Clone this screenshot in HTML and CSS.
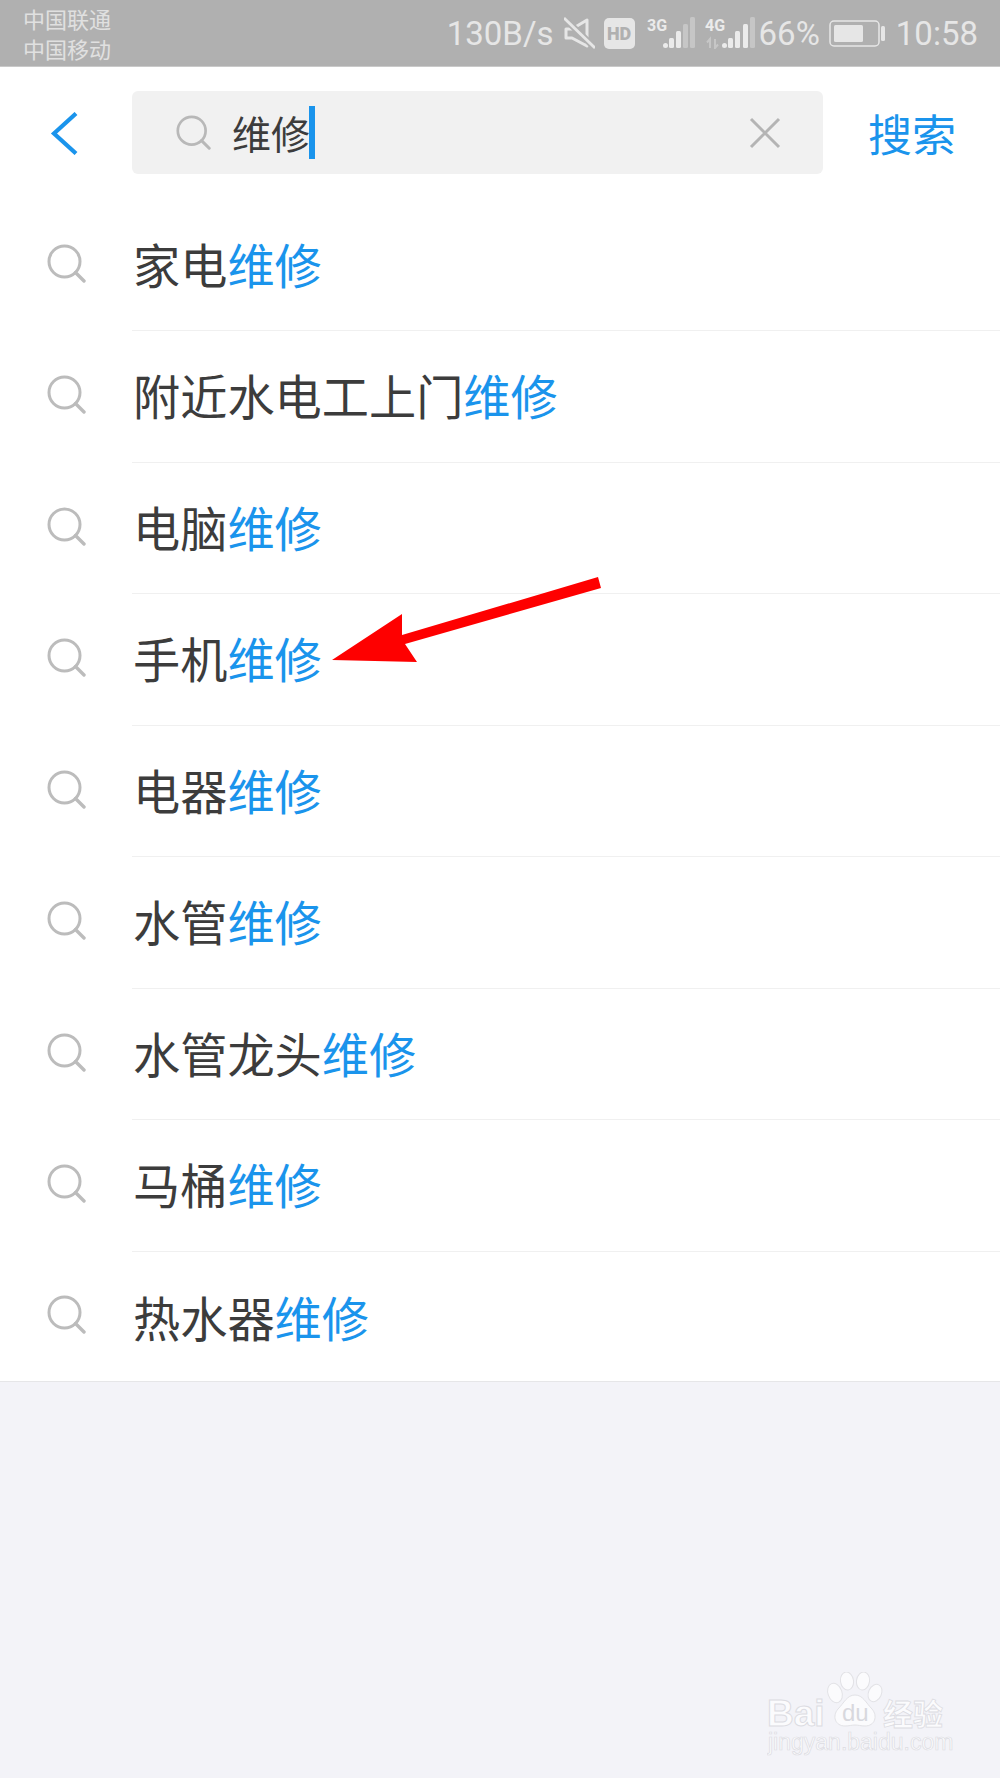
FILE: index.html
```html
<!DOCTYPE html>
<html lang="zh-CN">
<head>
<meta charset="utf-8">
<title>搜索</title>
<link rel="stylesheet" href="styles.css">
</head>
<body>
<svg class="defs" width="0" height="0" aria-hidden="true">
  <defs>
    <symbol id="search" viewBox="0 0 39 39">
      <circle cx="17.5" cy="17.5" r="15.5" fill="none" stroke="currentColor" stroke-width="3"/>
      <path d="M28.5 28.5L37 37" fill="none" stroke="currentColor" stroke-width="3.4" stroke-linecap="round"/>
    </symbol>
  </defs>
</svg>
<div class="page">
  <header class="status">
    <div class="carriers"><div>中国联通</div><div>中国移动</div></div>
    <div class="status-right">
      <span class="speed">130B/s</span>
      <svg class="mute" width="31" height="32" viewBox="0 0 31 32">
        <path d="M2 12h6L23 3v26L8 21H2z" fill="none" stroke="#e6e6e6" stroke-width="3" stroke-linejoin="round"/>
        <path d="M0 1L31 31" stroke="#b0b0b0" stroke-width="6.500"/>
        <path d="M0 1L31 31" stroke="#e6e6e6" stroke-width="2.800"/>
      </svg>
      <span class="hd">HD</span>
      <svg class="signal" width="48" height="32" viewBox="0 0 48 32">
        <text x="0" y="14" class="net">3G</text>
        <rect x="16" y="26" width="5" height="5" rx="2.500" fill="#ebebeb"/>
        <rect x="22" y="21" width="5" height="10" rx="1.500" fill="#ebebeb"/>
        <rect x="29" y="14" width="5" height="17" rx="1.500" fill="#ebebeb"/>
        <rect x="36" y="7" width="5" height="24" rx="1.500" fill="#c6c6c6"/>
        <rect x="43" y="0" width="5" height="31" rx="1.500" fill="#c6c6c6"/>
      </svg>
      <svg class="signal four" width="50" height="32" viewBox="0 0 50 32">
        <text x="0" y="14" class="net">4G</text>
        <path d="M5 31V22l-3 3.500M10 22v9l3-3.500" fill="none" stroke="#c6c6c6" stroke-width="2"/>
        <rect x="17" y="26" width="5" height="5" rx="2.500" fill="#ebebeb"/>
        <rect x="23" y="21" width="5" height="10" rx="1.500" fill="#ebebeb"/>
        <rect x="30" y="14" width="5" height="17" rx="1.500" fill="#ebebeb"/>
        <rect x="38" y="7" width="5" height="24" rx="1.500" fill="#ebebeb"/>
        <rect x="45" y="0" width="5" height="31" rx="1.500" fill="#c6c6c6"/>
      </svg>
      <span class="pct">66%</span>
      <svg class="battery" width="56" height="27" viewBox="0 0 56 27">
        <rect x="1" y="1" width="49" height="25" rx="4" fill="none" stroke="#e6e6e6" stroke-width="1.500"/>
        <rect x="5" y="5" width="29" height="17" rx="1.500" fill="#e6e6e6"/>
        <rect x="52" y="6" width="4" height="15" rx="1.500" fill="#e6e6e6"/>
      </svg>
      <span class="clock">10:58</span>
    </div>
  </header>

  <section class="searchbar">
    <svg class="back" width="28" height="43" viewBox="0 0 28 43">
      <path d="M26 1.500L4 21.500L26 41.500" fill="none" stroke="#1a94ec" stroke-width="4.200"/>
    </svg>
    <div class="field">
      <svg class="field-icon"><use href="#search"/></svg>
      <span class="query">维修</span><span class="caret"></span>
      <svg class="clear" width="32" height="32" viewBox="0 0 32 32">
        <path d="M2 2L30 30M30 2L2 30" stroke="#b4b4b4" stroke-width="3"/>
      </svg>
    </div>
    <span class="go">搜索</span>
  </section>

  <ul class="list">
    <li class="row"><svg class="row-icon"><use href="#search"/></svg><div class="row-text">家电<em>维修</em></div></li>
    <li class="row"><svg class="row-icon"><use href="#search"/></svg><div class="row-text">附近水电工上门<em>维修</em></div></li>
    <li class="row"><svg class="row-icon"><use href="#search"/></svg><div class="row-text">电脑<em>维修</em></div></li>
    <li class="row"><svg class="row-icon"><use href="#search"/></svg><div class="row-text">手机<em>维修</em></div></li>
    <li class="row"><svg class="row-icon"><use href="#search"/></svg><div class="row-text">电器<em>维修</em></div></li>
    <li class="row"><svg class="row-icon"><use href="#search"/></svg><div class="row-text">水管<em>维修</em></div></li>
    <li class="row"><svg class="row-icon"><use href="#search"/></svg><div class="row-text">水管龙头<em>维修</em></div></li>
    <li class="row"><svg class="row-icon"><use href="#search"/></svg><div class="row-text">马桶<em>维修</em></div></li>
    <li class="row"><svg class="row-icon"><use href="#search"/></svg><div class="row-text">热水器<em>维修</em></div></li>
  </ul>

  <svg class="arrow" width="280" height="96" viewBox="330 572 280 96">
    <path d="M332 660L402 614L402 635L598 577L601 588L405 644L417 662Z" fill="#fe0000"/>
  </svg>

  <svg class="mark" width="190" height="90" viewBox="0 0 190 90">
    <g class="mark-art">
      <ellipse cx="68" cy="21" rx="7" ry="10" transform="rotate(-20 68 21)"/>
      <ellipse cx="80" cy="9" rx="6.500" ry="9" transform="rotate(-8 80 9)"/>
      <ellipse cx="96" cy="9" rx="6.500" ry="9" transform="rotate(8 96 9)"/>
      <ellipse cx="108" cy="21" rx="6.500" ry="9" transform="rotate(25 108 21)"/>
      <path d="M88 23c8 0 11 8 17 14c6 7 3 17-7 17c-4 0-7-1-10-1s-6 1-10 1c-10 0-13-10-7-17c6-6 9-14 17-14z"/>
    </g>
    <text x="0" y="54" class="mark-bai">Bai</text>
    <text x="75" y="49" class="mark-du">du</text>
    <text x="116" y="53" class="mark-cn">经验</text>
    <text x="1" y="78" class="mark-url">jingyan.baidu.com</text>
  </svg>
</div>
</body>
</html>
```

FILE: styles.css
```css
* { box-sizing: border-box; }
html, body { margin: 0; padding: 0; }
body {
  background: #f3f3f8;
  font-family: "Noto Sans CJK SC", "Noto Sans", sans-serif;
}
.defs { position: absolute; }
.page { position: relative; width: 1000px; height: 1778px; overflow: hidden; }

/* status bar */
.status {
  height: 67px;
  background: #b0b0b0;
  border-bottom: 1px solid #c9c9c9;
  display: flex;
  align-items: center;
  justify-content: space-between;
  padding: 0 22px 0 23px;
  color: #e6e6e6;
}
.carriers { font-size: 22px; line-height: 30px; color: #e0e0e0; }
.status-right {
  display: flex;
  align-items: center;
  font-family: Roboto, "Liberation Sans", sans-serif;
  font-size: 33px;
}
.speed { margin-right: 10px; }
.mute { margin-right: 9px; }
.hd {
  width: 31px; height: 31px;
  background: #e6e6e6;
  border-radius: 5px;
  color: #b0b0b0;
  font-size: 18px;
  font-weight: 900;
  line-height: 31px;
  text-align: center;
  margin-right: 12px;
}
.signal { margin-right: 10px; }
.signal.four { margin-right: 4px; }
.net { font: 700 16px "Liberation Sans Narrow", Roboto, sans-serif; fill: #ebebeb; }
.pct { margin-right: 9px; }
.battery { margin-right: 11px; }

/* search header */
.searchbar {
  height: 132.5px;
  background: #fff;
  display: flex;
  align-items: center;
  padding: 0 44px 0 50px;
}
.back { margin-right: 54px; margin-top: 1px; }
.field {
  width: 691px;
  height: 83px;
  margin-top: -1px;
  background: #f1f1f1;
  border-radius: 6px;
  display: flex;
  align-items: center;
  padding-left: 44px;
}
.field-icon { width: 35px; height: 35px; color: #b8b8b8; margin-right: 21px; }
.query { font-size: 39px; line-height: 53px; color: #3c3c3c; }
.caret { width: 6px; height: 53px; background: #1a94ec; margin-left: -1px; }
.clear { margin-left: auto; margin-right: 42px; }
.go { margin-left: auto; font-size: 44px; color: #1a94ec; line-height: 60px; }

/* suggestions */
.list {
  list-style: none;
  margin: 0;
  padding: 0;
  background: #fff;
  border-bottom: 1px solid #e6e6e8;
}
.row { height: 131.5px; display: flex; align-items: center; }
.row:last-child { height: 129.5px; }
.row-icon { width: 39px; height: 39px; color: #bcbcbc; margin: -4px 46px 0 47px; flex: none; }
.row-text {
  flex: 1;
  height: 100%;
  display: flex;
  align-items: center;
  border-bottom: 1px solid #f0f0f0;
  font-size: 47.2px;
  color: #3c3c3c;
  padding: 0 0 3px 1px;
  white-space: pre;
}
.row:last-child .row-text { border-bottom: 0; padding-bottom: 0; }
.row-text em { font-style: normal; color: #1a94ec; }

/* overlays */
.arrow { position: absolute; left: 330px; top: 572px; }
.mark { position: absolute; left: 767px; top: 1672px; }
.mark-art { fill: #fbfbfd; stroke: #e2e2e6; stroke-width: 1; }
.mark-bai { font: 700 37px "Liberation Sans", sans-serif; fill: #fbfbfd; stroke: #dcdce2; stroke-width: 1; }
.mark-du { font: 400 24px "Liberation Sans", sans-serif; fill: #d8d8de; }
.mark-cn { font: 700 30px "Noto Sans CJK SC", sans-serif; fill: #fbfbfd; stroke: #dcdce2; stroke-width: .8; }
.mark-url { font: 400 23px "Liberation Sans", sans-serif; fill: #fbfbfd; stroke: #dcdce2; stroke-width: .7; }
```
